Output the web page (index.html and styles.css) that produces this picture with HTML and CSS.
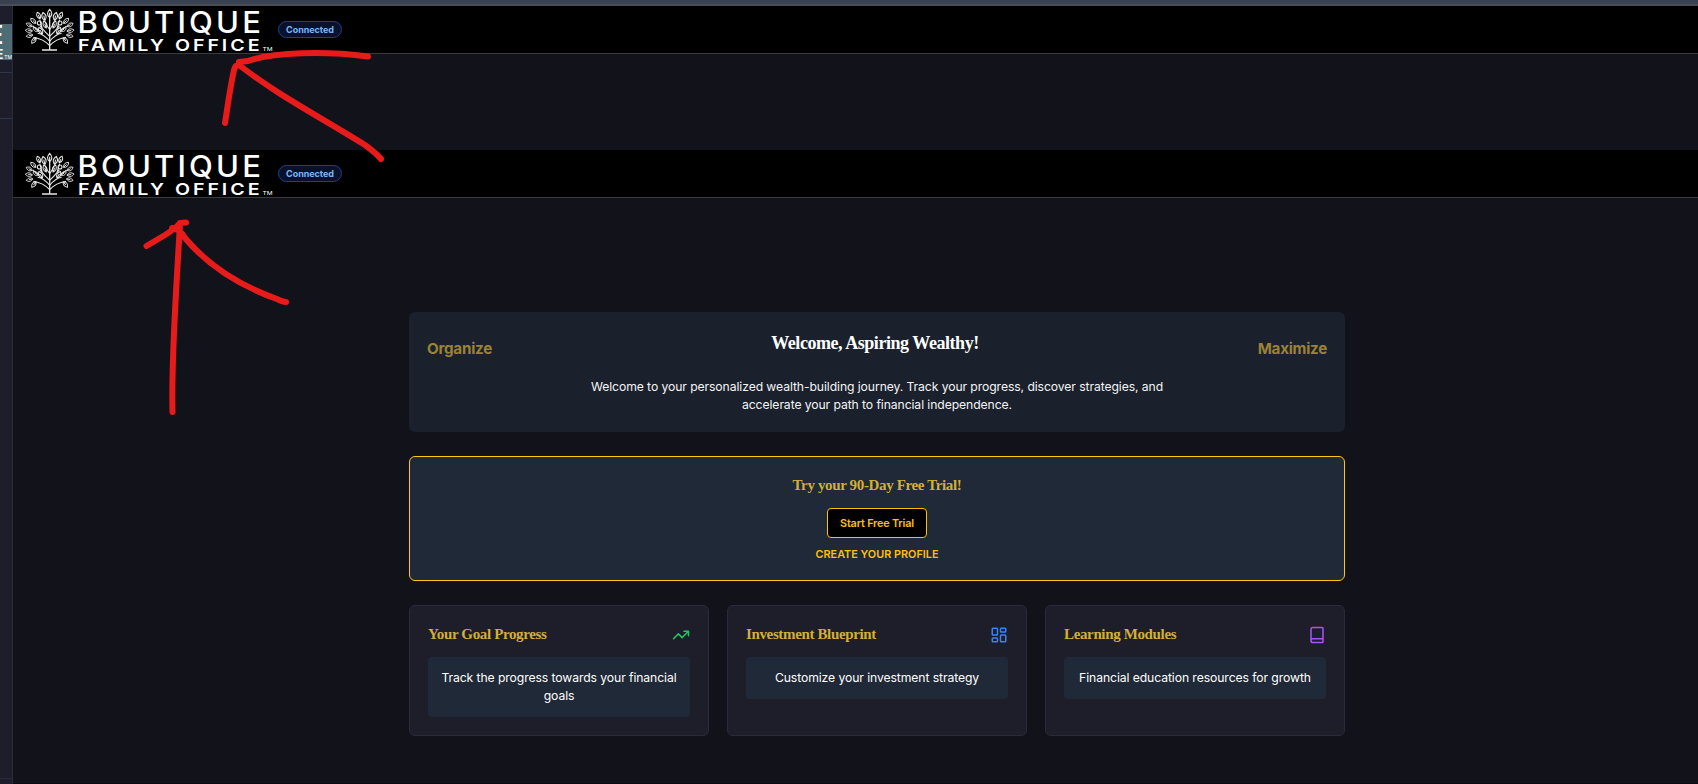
FILE: index.html
```html
<!DOCTYPE html>
<html lang="en">
<head>
<meta charset="utf-8">
<title>Boutique Family Office</title>
<link rel="stylesheet" href="styles.css">
</head>
<body>
<svg class="defs" width="0" height="0" aria-hidden="true">
  <defs>
    <path id="leaf" d="M0 12C-9 4 -8 -5 0 -13C8 -5 9 4 0 12ZM0 12V-3"/>
    <g id="side">
      <path d="M89 111C79 99 65 89 53 87M89 124C74 108 58 102 40 99M89 96C80 88 68 75 60 65M89 76C82 67 78 59 75 52M60 80C52 77 45 71 38 65M68 76C65 66 62 56 59 46"/>
      <use href="#leaf" transform="translate(72 37) rotate(-13)"/>
      <use href="#leaf" transform="translate(56 34) rotate(-25) scale(.85)"/>
      <use href="#leaf" transform="translate(40 50) rotate(-45) scale(.85)"/>
      <use href="#leaf" transform="translate(28 62) rotate(-62) scale(.8)"/>
      <use href="#leaf" transform="translate(27 79) rotate(-82) scale(.85)"/>
      <use href="#leaf" transform="translate(29 94) rotate(-104) scale(.8)"/>
      <use href="#leaf" transform="translate(42 108) rotate(-142) scale(.85)"/>
      <use href="#leaf" transform="translate(48 76) rotate(-58) scale(.8)"/>
      <use href="#leaf" transform="translate(62 80) rotate(-28) scale(.9)"/>
      <use href="#leaf" transform="translate(75 61) rotate(-20) scale(.9)"/>
      <circle cx="58" cy="56" r="6"/>
    </g>
    <g id="brand">
      <g transform="translate(-5 -1.700) scale(.33333)" fill="none" stroke="#e6e6e6" stroke-width="3.300">
        <path d="M89 38V136M66 137H111" stroke-width="4"/>
        <use href="#leaf" transform="translate(89 28)"/>
        <use href="#side"/>
        <use href="#side" transform="translate(178 0) scale(-1 1)"/>
      </g>
      <g fill="#fff">
        <text class="brand-top" x="52.500" y="27.200" textLength="186.500" lengthAdjust="spacingAndGlyphs">BOUTIQUE</text>
        <text class="brand-bottom" x="53" y="44.800" textLength="184.500" lengthAdjust="spacingAndGlyphs">FAMILY OFFICE</text>
        <text class="brand-tm" x="237.5" y="44.5" textLength="10" lengthAdjust="spacingAndGlyphs">TM</text>
      </g>
    </g>
  </defs>
</svg>
<div class="topbar"></div>
<div class="shell">
  <aside class="sidebar">
    <div class="side-logo"><b class="e1">E</b><b class="e2">E</b><i>TM</i></div>
    <div class="side-row"></div>
    <div class="side-rest"></div>
  </aside>
  <div class="page">
    <header class="bar">
      <svg class="logo" width="250" height="47" viewBox="0 0 250 47"><use href="#brand"/></svg>
      <span class="badge">Connected</span>
    </header>
    <div class="gap"></div>
    <header class="bar">
      <svg class="logo" width="250" height="47" viewBox="0 0 250 47"><use href="#brand"/></svg>
      <span class="badge">Connected</span>
    </header>
    <main class="content">
      <section class="welcome">
        <div class="side-word">Organize</div>
        <div class="welcome-mid">
          <h1>Welcome, Aspiring Wealthy!</h1>
          <p>Welcome to your personalized wealth-building journey. Track your progress, discover strategies, and<br>accelerate your path to financial independence.</p>
        </div>
        <div class="side-word right">Maximize</div>
      </section>
      <section class="trial">
        <h2>Try your 90-Day Free Trial!</h2>
        <button class="start">Start Free Trial</button>
        <a class="profile">CREATE YOUR PROFILE</a>
      </section>
      <section class="cards">
        <article class="card">
          <div class="card-head"><h2>Your Goal Progress</h2>
            <svg class="icon green" viewBox="0 0 24 24"><path d="M22 7 13.5 15.500 8.500 10.500 2 17M16 7h6v6"/></svg></div>
          <p>Track the progress towards your financial<br>goals</p>
        </article>
        <article class="card">
          <div class="card-head"><h2>Investment Blueprint</h2>
            <svg class="icon blue" viewBox="0 0 24 24"><rect x="3" y="3" width="7" height="9" rx="1"/><rect x="14" y="3" width="7" height="5" rx="1"/><rect x="14" y="12" width="7" height="9" rx="1"/><rect x="3" y="16" width="7" height="5" rx="1"/></svg></div>
          <p>Customize your investment strategy</p>
        </article>
        <article class="card">
          <div class="card-head"><h2>Learning Modules</h2>
            <svg class="icon purple" viewBox="0 0 24 24"><path d="M4 19.500v-15A2.500 2.500 0 0 1 6.500 2H19a1 1 0 0 1 1 1v18a1 1 0 0 1-1 1H6.500a1 1 0 0 1 0-5H20"/></svg></div>
          <p>Financial education resources for growth</p>
        </article>
      </section>
    </main>
  </div>
</div>
<svg class="arrows" width="400" height="430" viewBox="0 0 400 430">
  <path d="M368 56.500C326 51 273 52 248 61L239 62M225 123C228 104 230 88 234 70Q235 65 239 65C276 94 320 117 365 145Q376 153 381 159"/>
  <path d="M172.500 412C171 355 177 280 180 223M146.500 246L165 235Q176 228 180 223L186 222.500M172 228Q180 229 185 238C205 262 235 284 277 299Q283 302 286 302"/>
</svg>
</body>
</html>
```
FILE: styles.css
```css
* { box-sizing: border-box; }
body { margin: 0; height: 784px; overflow: hidden; background: #12121a; font-family: Inter, "Liberation Sans", sans-serif; color: #fff; display: flex; flex-direction: column; }
h1, h2, p { margin: 0; }
.defs { position: absolute; }
.topbar { height: 6px; flex: none; background: #374151; border-bottom: 2px solid #4a4d55; }
.shell { flex: 1; display: flex; min-height: 0; }

.sidebar { width: 13px; flex: none; background: #1e1d2b; border-right: 1px solid #2a2a3c; padding-top: 18px; display: flex; flex-direction: column; }
.side-logo { height: 36px; background: #4f6b73; overflow: hidden; position: relative; line-height: 1; }
.side-logo b { position: absolute; right: 8.500px; font-weight: 600; }
.side-logo .e1 { top: -1.500px; font-size: 25px; }
.side-logo .e2 { top: 24px; font-size: 13.500px; }
.side-logo i { position: absolute; right: 0; bottom: 0; font-size: 5px; font-style: normal; }
.side-row { height: 47px; margin-top: 12px; border-top: 1px solid #2d3748; border-bottom: 1px solid #2d3748; }
.side-rest { flex: 1; margin-bottom: 5px; border-bottom: 1px solid #2a2a3c; }

.page { flex: 1; display: flex; flex-direction: column; border-bottom: 1px solid #0b0a12; }
.bar { height: 48px; flex: none; background: #000; border-bottom: 1px solid #3a3a3a; display: flex; align-items: center; padding-left: 12px; }
.logo { flex: none; display: block; }
.brand-top { font: 500 29.500px Inter, sans-serif; letter-spacing: 3px; }
.brand-bottom { font: 600 16.500px Inter, sans-serif; letter-spacing: 2.500px; }
.brand-tm { font: 400 5px Inter, sans-serif; }
.badge { margin-left: 3px; width: 64px; height: 17px; border: 1px solid #1e408a; border-radius: 9px; background: #0a122b; color: #79b8fb; font-size: 9px; font-weight: 700; letter-spacing: -.05px; line-height: 15px; text-align: center; }
.gap { height: 96px; flex: none; }

.content { width: 936px; margin: 114px 0 0 396px; display: flex; flex-direction: column; gap: 24px; }
.welcome { height: 120px; background: #1b212c; border-radius: 6px; padding: 18px; display: grid; grid-template-columns: 100px 1fr 100px; }
.side-word { color: #9a8236; font-size: 15.200px; font-weight: 700; letter-spacing: -.25px; line-height: 24px; padding-top: 7px; }
.side-word.right { text-align: right; }
.welcome-mid { text-align: center; white-space: nowrap; }
h1, h2 { font-family: "Liberation Serif", serif; font-weight: 700; }
h1 { font-size: 18px; line-height: 24px; letter-spacing: -.45px; padding: 1px 4px 0 0; }
.welcome-mid p { margin-top: 23px; font-size: 12.200px; letter-spacing: -.09px; line-height: 18px; color: #f3f4f6; }
.trial { height: 125px; border: 1px solid #ffc61a; border-radius: 6px; background: #1f2937; display: flex; flex-direction: column; align-items: center; padding-top: 17px; }
h2 { color: #d4af37; font-size: 15px; line-height: 22px; letter-spacing: -.36px; white-space: nowrap; }
.start { margin-top: 12px; width: 100px; height: 30px; flex: none; padding: 0; border: 1px solid #ffc107; border-radius: 4px; background: #000; color: #ffc107; font: 600 10.800px Inter, sans-serif; letter-spacing: -.16px; }
.profile { margin-top: 9px; color: #ffc107; font-size: 10.800px; font-weight: 600; letter-spacing: .03px; line-height: 16px; }
.cards { display: grid; grid-template-columns: repeat(3, 1fr); gap: 18px; }
.card { height: 131px; background: #1e1d2a; border: 1px solid #2a2a3c; border-radius: 6px; padding: 18px; }
.card-head { display: flex; justify-content: space-between; align-items: center; height: 22px; }
.card-head h2 { padding-bottom: 2px; }
.card p { margin-top: 11px; padding: 12px 0; border-radius: 4px; background: #1f2937; text-align: center; font-size: 12.200px; letter-spacing: -.09px; line-height: 18px; white-space: nowrap; }
.icon { width: 18px; height: 18px; fill: none; stroke-width: 2; stroke-linecap: round; stroke-linejoin: round; }
.green { stroke: #22c55e; }
.blue { stroke: #3b82f6; }
.purple { stroke: #a855f7; }
.arrows { position: absolute; left: 0; top: 0; fill: none; stroke: #e81b1b; stroke-width: 6; stroke-linecap: round; stroke-linejoin: round; pointer-events: none; }
```
